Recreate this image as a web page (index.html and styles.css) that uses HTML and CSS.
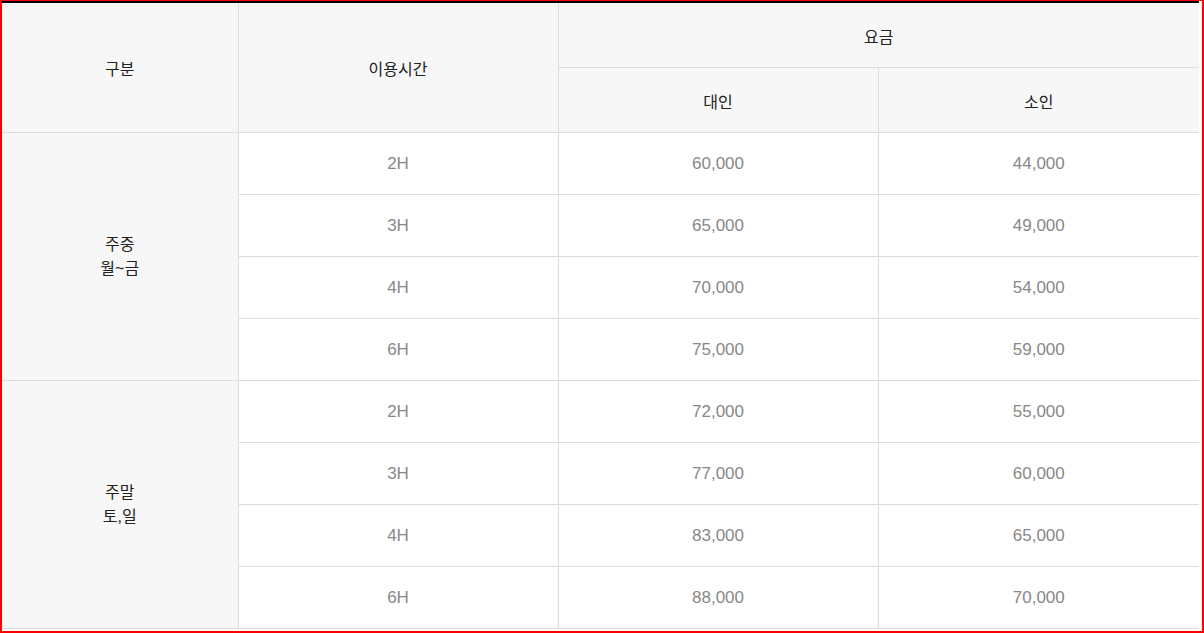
FILE: index.html
```html
<!DOCTYPE html>
<html lang="ko">
<head>
<meta charset="utf-8">
<link rel="stylesheet" href="styles.css">
</head>
<body>
<div class="frame">
  <table class="price">
    <colgroup>
      <col class="c1"><col class="c2"><col class="c3"><col class="c4">
    </colgroup>
    <thead>
      <tr class="h1">
        <th rowspan="2">구분</th>
        <th rowspan="2" class="bl">이용시간</th>
        <th colspan="2" class="bl">요금</th>
      </tr>
      <tr class="h2">
        <th class="bl">대인</th>
        <th class="bl">소인</th>
      </tr>
    </thead>
    <tbody>
      <tr><th rowspan="4" class="grp">주중<br>월~금</th><td>2H</td><td>60,000</td><td>44,000</td></tr>
      <tr><td>3H</td><td>65,000</td><td>49,000</td></tr>
      <tr><td>4H</td><td>70,000</td><td>54,000</td></tr>
      <tr><td>6H</td><td>75,000</td><td>59,000</td></tr>
      <tr><th rowspan="4" class="grp">주말<br>토,일</th><td>2H</td><td>72,000</td><td>55,000</td></tr>
      <tr><td>3H</td><td>77,000</td><td>60,000</td></tr>
      <tr><td>4H</td><td>83,000</td><td>65,000</td></tr>
      <tr><td>6H</td><td>88,000</td><td>70,000</td></tr>
    </tbody>
  </table>
</div>
</body>
</html>
```

FILE: styles.css
```css
html, body {
  margin: 0;
  padding: 0;
  background: #fff;
}

.frame {
  box-sizing: border-box;
  width: 1204px;
  height: 633px;
  border: 2px solid #ff0000;
  border-top-width: 1px;
  overflow: hidden;
}

.price {
  width: 1197px;
  border-collapse: collapse;
  table-layout: fixed;
  border-top: 2px solid #000;
  font-family: "Liberation Sans", "Noto Sans CJK KR", sans-serif;
  font-size: 16px;
}

.c1 { width: 236px; }
.c2 { width: 320px; }
.c3 { width: 320px; }
.c4 { width: 321px; }

.price th,
.price td {
  padding: 1px 0 0;
  text-align: center;
  vertical-align: middle;
  border-bottom: 1px solid #dcdcdc;
  font-weight: normal;
}

.price thead th {
  background: #f7f7f7;
  color: #222;
}

.price .bl,
.price td {
  border-left: 1px solid #dcdcdc;
}

.h1 th { height: 63px; }
.h2 th { height: 63px; }

.price tbody tr { height: 62px; }

.price td {
  color: #888;
  background: #fff;
  font-size: 17px;
}

.price .grp {
  background: #f7f7f7;
  color: #222;
  line-height: 24px;
}
```
